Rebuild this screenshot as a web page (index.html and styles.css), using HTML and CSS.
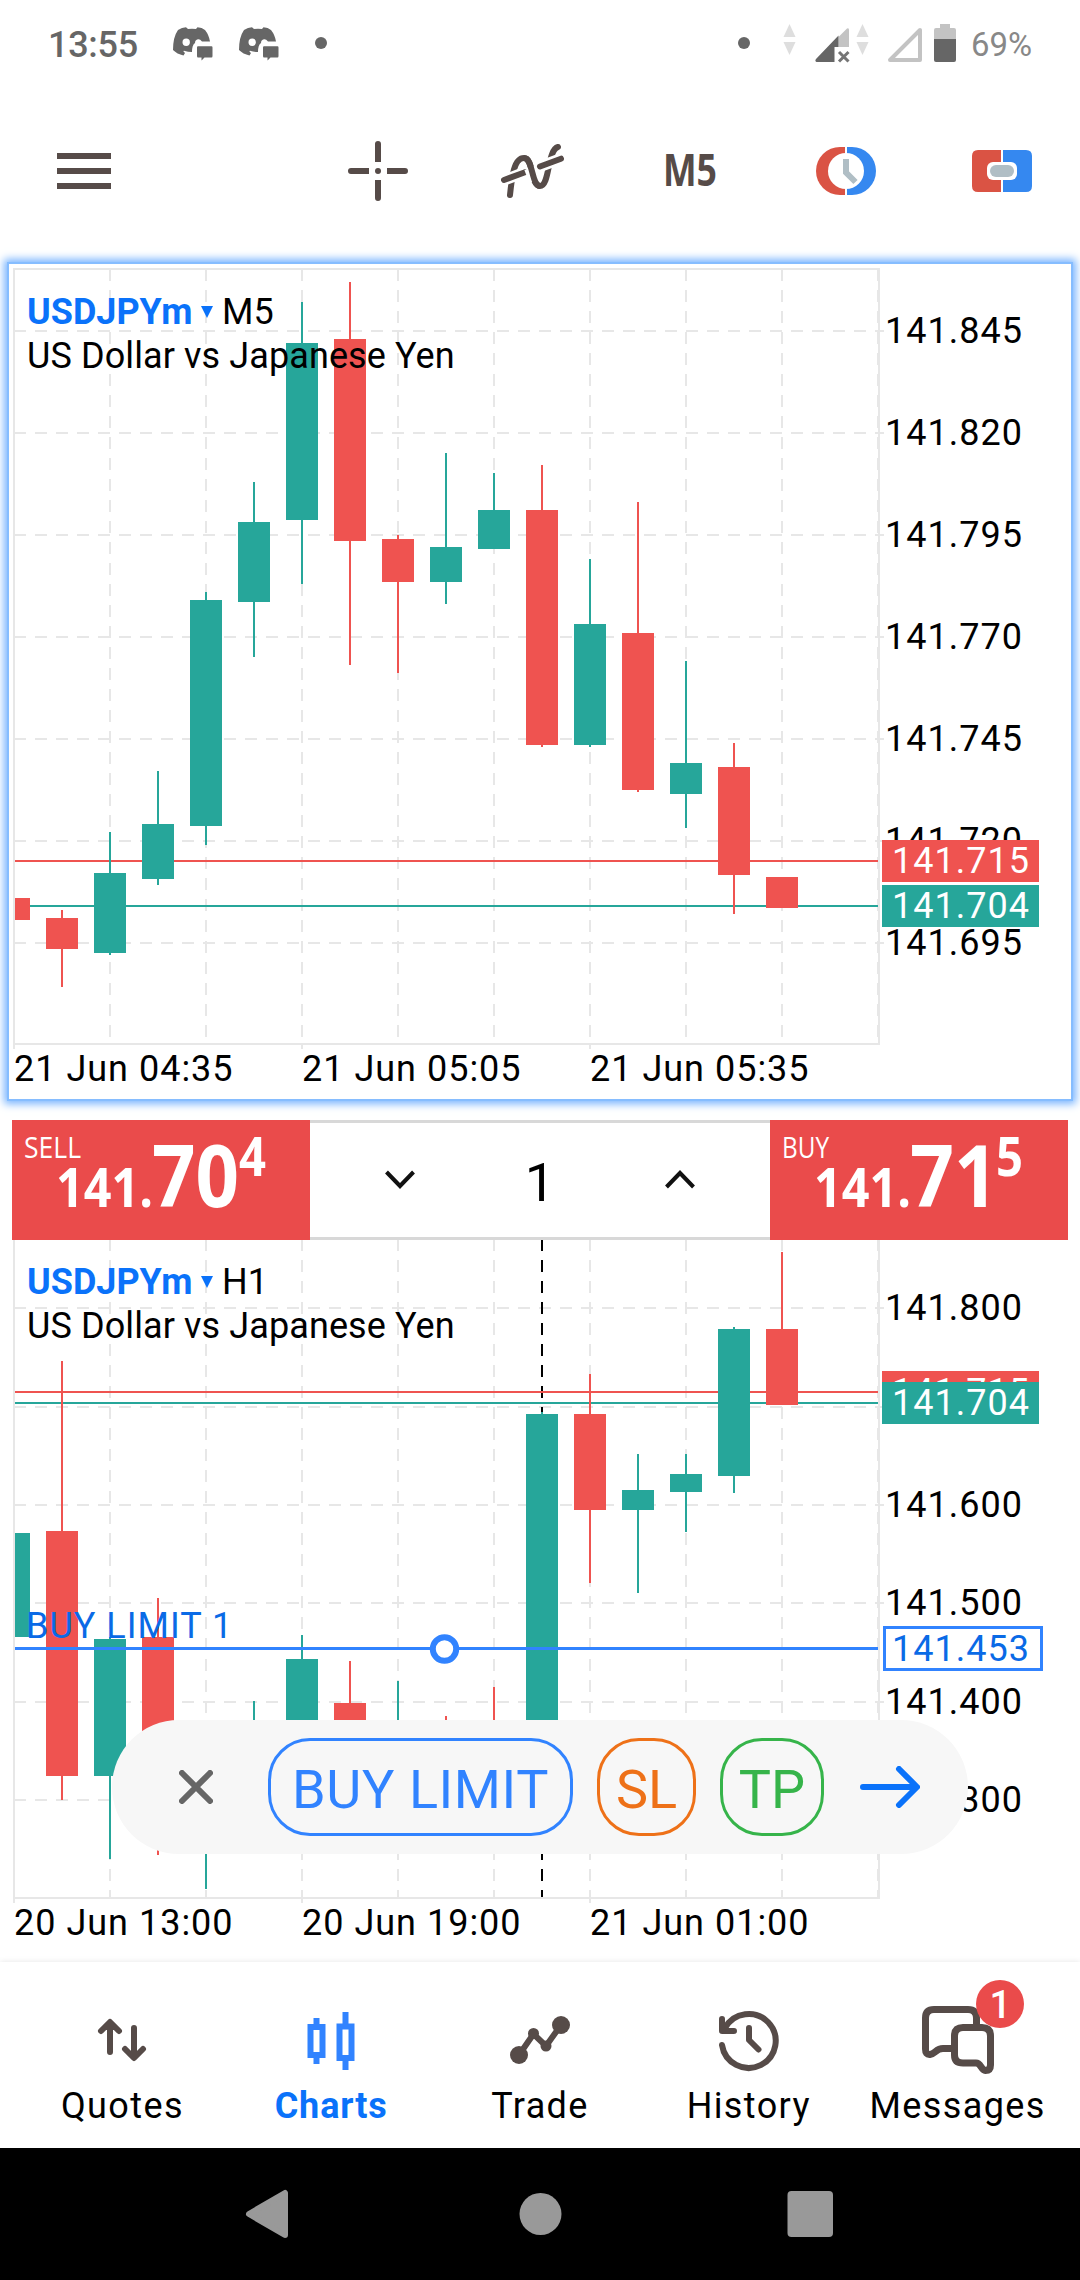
FILE: index.html
```html
<!DOCTYPE html>
<html lang="en">

<head>
    <meta charset="UTF-8">
    <meta name="viewport" content="width=device-width, initial-scale=1.0">
    <title>Charts</title>
    <link rel="stylesheet" href="styles.css">
</head>

<body>
    <header class="status-bar">
        <span class="clock">13:55</span>
        <svg class="chat-icon" width="41" height="36" viewBox="0 0 41 36">
            <path fill-rule="evenodd" d="M5 3Q9 .5 13 .3L15 2Q19 1.4 23 2L24.500 .3Q29 .5 32 3Q36 8 37 14.500H29Q27 12 25 12.300Q22 13 22 16Q19 18 19 25Q15 25 11 23.800Q9.500 24 12 26L10.500 28.500Q4 27 0 23Q0 10 5 3zM9.500 15.300a3.700 3.700 0 1 0 7.400 0a3.700 3.700 0 1 0 -7.400 0z" />
            <path d="M25 19.300H38.500Q39.500 19.300 39.500 20.500V29Q39.500 30.500 38.500 30.500H31.500L28.500 33.500V30.500H25Q24 30.500 24 29V20.500Q24 19.300 25 19.300z" />
        </svg>
        <svg class="chat-icon" width="41" height="36" viewBox="0 0 41 36">
            <path fill-rule="evenodd" d="M5 3Q9 .5 13 .3L15 2Q19 1.4 23 2L24.500 .3Q29 .5 32 3Q36 8 37 14.500H29Q27 12 25 12.300Q22 13 22 16Q19 18 19 25Q15 25 11 23.800Q9.500 24 12 26L10.500 28.500Q4 27 0 23Q0 10 5 3zM9.500 15.300a3.700 3.700 0 1 0 7.400 0a3.700 3.700 0 1 0 -7.400 0z" />
            <path d="M25 19.300H38.500Q39.500 19.300 39.500 20.500V29Q39.500 30.500 38.500 30.500H31.500L28.500 33.500V30.500H25Q24 30.500 24 29V20.500Q24 19.300 25 19.300z" />
        </svg>
        <span class="dot"></span>
        <svg class="status-icons" width="300" height="90" viewBox="735 0 300 90">
            <circle cx="744" cy="43" r="6" fill="#666" />
            <path fill="#dedede" d="M789.500 24l6 13h-12zM789.500 55l6-13h-12zM862.500 24l6 13h-12zM862.500 55l6-13h-12z" />
            <path fill="#c3c3c3" d="M838.500 37L847 28.500Q849 27.500 849 30V47H838.500z" />
            <path fill="#666" d="M838.500 35.500V47H834.500V62H816.500Q814.500 61 816 59z" />
            <path stroke="#757575" stroke-width="3" d="M839 52l9.500 9.500M848.500 52l-9.500 9.500" />
            <path fill="none" stroke="#c3c3c3" stroke-width="4" stroke-linejoin="round" d="M890 60L920 30V60z" />
            <path fill="#c3c3c3" d="M940 28v-4h10v4h4q2 0 2 2v9h-22v-9q0-2 2-2z" />
            <path fill="#666" d="M934 39h22v21q0 2-2 2h-18q-2 0-2-2z" />
            <text class="battery" x="971" y="55.500" textLength="61" lengthAdjust="spacingAndGlyphs">69%</text>
        </svg>
    </header>

    <nav class="toolbar">
        <svg width="54" height="60" viewBox="57 141 54 60">
            <path d="M57 156h54M57 171h54M57 186h54" />
        </svg>
        <svg class="crosshair" width="60" height="60" viewBox="348 141 60 60">
            <path stroke-linecap="round" d="M378 144v14M378 184v14M351 171h14M391 171h14" />
            <path d="M378 157v5M378 180v5M364 171h5M387 171h5" />
            <circle cx="378" cy="171" r="3" fill="#564b48" />
        </svg>
        <svg class="indicators" width="66" height="60" viewBox="500 141 66 60">
            <path stroke-linecap="round" d="M510 195C512 176 514 158 524 158C534 158 530 186 540 186C550 186 547 150 558 147" />
            <path class="cut" d="M501 181.200L528 171M536 168L564 157.500" />
            <path stroke-linecap="round" d="M504 180L525 172.200M540 166.500L561 158.700" />
            <path class="cut" d="M529.500 168L534.500 181" />
            <path d="M524 158C533 158 531.500 186 540 186" />
        </svg>
        <svg class="timeframe" width="54" height="60" viewBox="663 141 54 60">
            <text class="period" x="663" y="186" textLength="54" lengthAdjust="spacingAndGlyphs">M5</text>
        </svg>
        <svg width="60" height="60" viewBox="816 141 60 60">
            <path class="sell-fill" d="M845 147h-5a24 24 0 0 0 0 48h5z" />
            <path class="buy-fill" d="M847 147h5a24 24 0 0 1 0 48h-5z" />
            <circle cx="846" cy="171" r="18" fill="#fff" />
            <path class="gray-line" d="M846 159v13.500l9.500 9.500" />
        </svg>
        <svg width="60" height="60" viewBox="972 141 60 60">
            <path class="sell-fill" d="M1001 150h-23q-6 0-6 6v30q0 6 6 6h23z" />
            <path class="buy-fill" d="M1003 150h23q6 0 6 6v30q0 6-6 6h-23z" />
            <rect x="987" y="162" width="30" height="18" rx="6" fill="#fff" />
            <rect x="990" y="165" width="24" height="12" rx="6" fill="#b0bec5" />
        </svg>
    </nav>

    <main>
        <section class="chart-panel selected">
            <svg width="1062" height="835" viewBox="9 264 1062 835">
                <path class="grid" d="M110 269V1043M206 269V1043M302 269V1043M398 269V1043M494 269V1043M590 269V1043M686 269V1043M782 269V1043M878 269V1043" />
                <path class="grid" d="M14 331H878M14 433H878M14 535H878M14 637H878M14 739H878M14 841H878M14 943H878" />
                <path class="frame" d="M14 1049V269H879V1044H14M302 1044V1049M590 1044V1049M878 331h6M878 433h6M878 535h6M878 637h6M878 739h6M878 841h6M878 943h6" />
                <path class="ask" d="M15 861H878" />
                <path class="bid" d="M15 906H878" />

                <path class="wick up" d="M110 832V955M158 771V885M206 592V845M254 482V657M302 302V584M446 453V604M494 473V549M590 559V747M686 661V828" />
                <path class="body up" d="M110 873V953M158 824V879M206 600V826M254 522V602M302 343V520M446 547V582M494 510V549M590 624V745M686 763V794" />
                <path class="wick down" d="M62 910V987M350 282V665M398 535V673M542 465V747M638 502V792M734 743V914" />
                <path class="body down" d="M62 918V949M350 339V541M398 539V582M542 510V745M638 633V790M734 767V875M782 877V908" />
                <rect class="down-fill" x="15" y="898" width="15" height="22" />

                <text class="symbol" x="27" y="324">USDJPYm</text>
                <path fill="#0a72fa" d="M201 306h12l-6 12z" />
                <text x="222" y="324" class="title">M5</text>
                <text x="27" y="367.500" class="title">US Dollar vs Japanese Yen</text>

                <text x="885" y="343">141.845</text>
                <text x="885" y="445">141.820</text>
                <text x="885" y="547">141.795</text>
                <text x="885" y="649">141.770</text>
                <text x="885" y="751">141.745</text>
                <text x="885" y="853">141.720</text>
                <text x="885" y="955">141.695</text>
                <rect class="down-fill" x="882" y="840" width="157" height="42" />
                <text class="tag" x="892" y="873">141.715</text>
                <rect class="up-fill" x="882" y="885" width="157" height="42" />
                <text class="tag" x="892" y="918">141.704</text>

                <text x="14" y="1081">21 Jun 04:35</text>
                <text x="302" y="1081">21 Jun 05:05</text>
                <text x="590" y="1081">21 Jun 05:35</text>
            </svg>
        </section>

        <section class="trade-bar">
            <svg class="price-button" width="298" height="120" viewBox="12 1120 298 120">
                <text class="side" x="24" y="1158" textLength="57" lengthAdjust="spacingAndGlyphs">SELL</text>
                <text class="price" x="56" y="1207" textLength="97" lengthAdjust="spacingAndGlyphs">141.</text>
                <text class="price big" x="152" y="1207" textLength="87" lengthAdjust="spacingAndGlyphs">70</text>
                <text class="price" x="239" y="1176" textLength="27" lengthAdjust="spacingAndGlyphs">4</text>
            </svg>
            <div class="volume">
                <svg width="30" height="20" viewBox="0 0 30 20">
                    <path d="M1.500 2L15 16L28.500 2" />
                </svg>
                <span>1</span>
                <svg width="30" height="20" viewBox="0 0 30 20">
                    <path d="M1.500 17L15 3L28.500 17" />
                </svg>
            </div>
            <svg class="price-button" width="298" height="120" viewBox="770 1120 298 120">
                <text class="side" x="782" y="1158" textLength="47" lengthAdjust="spacingAndGlyphs">BUY</text>
                <text class="price" x="814" y="1207" textLength="97" lengthAdjust="spacingAndGlyphs">141.</text>
                <text class="price big" x="910" y="1207" textLength="88" lengthAdjust="spacingAndGlyphs">71</text>
                <text class="price" x="996" y="1176" textLength="27" lengthAdjust="spacingAndGlyphs">5</text>
            </svg>
        </section>

        <section class="chart-panel">
            <svg width="1080" height="722" viewBox="0 1240 1080 722">
                <path class="grid" d="M110 1239V1897M206 1239V1897M302 1239V1897M398 1239V1897M494 1239V1897M590 1239V1897M686 1239V1897M782 1239V1897M878 1239V1897" />
                <path class="grid" d="M14 1308H878M14 1407H878M14 1505H878M14 1603H878M14 1702H878M14 1800H878" />
                <path class="frame" d="M14 1903V1240M879 1240V1898H14M302 1898V1903M590 1898V1903M878 1308h6M878 1407h6M878 1505h6M878 1603h6M878 1702h6M878 1800h6" />
                <path class="grid day" d="M542 1239V1897" />
                <path class="ask" d="M15 1392H878" />
                <path class="bid" d="M15 1403H878" />

                <path class="wick up" d="M110 1637V1859M206 1780V1889M254 1701V1800M302 1635V1800M398 1681V1800M542 1412V1800M638 1454V1593M686 1454V1532M734 1327V1493" />
                <path class="body up" d="M110 1639V1776M302 1659V1780M542 1414V1790M638 1490V1510M686 1474V1492M734 1329V1476" />
                <path class="wick down" d="M62 1361V1800M158 1598V1855M350 1661V1800M446 1716V1800M494 1687V1800M590 1374V1583M782 1252V1405" />
                <path class="body down" d="M62 1531V1776M158 1637V1790M350 1703V1780M590 1414V1510M782 1329V1405" />
                <rect class="up-fill" x="15" y="1533" width="15" height="104" />

                <text class="symbol" x="27" y="1294">USDJPYm</text>
                <path fill="#0a72fa" d="M201 1276h12l-6 12z" />
                <text x="222" y="1294" class="title">H1</text>
                <text x="27" y="1337.500" class="title">US Dollar vs Japanese Yen</text>

                <path class="order-line" d="M15 1648.500H878" />
                <circle class="handle" cx="444.500" cy="1649" r="11.700" />
                <text class="order" x="26" y="1637.500">BUY LIMIT 1</text>

                <text x="885" y="1320">141.800</text>
                <text x="885" y="1517">141.600</text>
                <text x="885" y="1615">141.500</text>
                <text x="885" y="1714">141.400</text>
                <text x="885" y="1812">141.300</text>
                <rect class="down-fill" x="882" y="1371" width="157" height="42" />
                <text class="tag" x="892" y="1404">141.715</text>
                <rect class="up-fill" x="882" y="1382" width="157" height="42" />
                <text class="tag" x="892" y="1415">141.704</text>
                <rect class="order-tag" x="884.500" y="1627.500" width="157" height="42" />
                <text class="order" x="892" y="1661">141.453</text>

                <text x="14" y="1935">20 Jun 13:00</text>
                <text x="302" y="1935">20 Jun 19:00</text>
                <text x="590" y="1935">21 Jun 01:00</text>
            </svg>

            <div class="order-popup">
                <svg class="close" width="34" height="34" viewBox="0 0 34 34">
                    <path d="M3 3L31 31M31 3L3 31" />
                </svg>
                <button class="btn btn-limit">BUY LIMIT</button>
                <button class="btn btn-sl">SL</button>
                <button class="btn btn-tp">TP</button>
                <svg class="next" width="60" height="42" viewBox="0 0 60 42">
                    <path d="M3 21H56M39 3L57 21L39 39" />
                </svg>
            </div>
        </section>
    </main>

    <nav class="tab-bar">
        <a class="tab">
            <svg width="90" height="76" viewBox="77 2000 90 76">
                <path d="M110 2052V2023M101 2031L110 2022L119 2031M134 2028V2057M125 2049L134 2058L143 2049" />
            </svg>
            <span>Quotes</span>
        </a>
        <a class="tab active">
            <svg width="90" height="76" viewBox="286 2000 90 76">
                <path d="M310.500 2027h12v28h-12zM316.500 2018v8M316.500 2056v8M339.500 2026.500h12v31.500h-12zM345.500 2012v14M345.500 2058v12" />
            </svg>
            <span>Charts</span>
        </a>
        <a class="tab">
            <svg width="90" height="76" viewBox="495 2000 90 76">
                <path d="M519 2055L533.500 2034L546 2046L561 2025" />
                <g fill="#564b48" stroke="none">
                    <circle cx="519" cy="2055" r="9" />
                    <circle cx="533.500" cy="2033.500" r="5.500" />
                    <circle cx="546" cy="2046" r="5.500" />
                    <circle cx="561" cy="2025" r="9" />
                </g>
            </svg>
            <span>Trade</span>
        </a>
        <a class="tab">
            <svg width="90" height="76" viewBox="704 2000 90 76">
                <path d="M722 2045A27 27 0 1 0 725 2028M722 2019V2031H734M749 2028V2040L758.500 2049.500" />
            </svg>
            <span>History</span>
        </a>
        <a class="tab">
            <svg width="90" height="76" viewBox="913 2000 90 76">
                <path class="bubble" d="M976.500 2024V2018Q976.500 2009.500 968 2009.500H934Q925.500 2009.500 925.500 2018V2049Q925.500 2055 930 2054.500C935 2054 936 2048.500 943 2048.500H952" />
                <path class="bubble" d="M963 2027.500H982Q990.500 2027.500 990.500 2036V2065Q990.500 2070.500 985.500 2070.500C981 2070 981 2063 976 2063H963Q954.500 2063 954.500 2055V2036Q954.500 2027.500 963 2027.500z" />
            </svg>
            <span>Messages</span>
            <b class="badge">1</b>
        </a>
    </nav>

    <footer class="system-nav">
        <svg width="54" height="54" viewBox="240 2187 54 54">
            <path stroke="#999" stroke-width="6" stroke-linejoin="round" d="M249 2214L285 2193V2235z" />
        </svg>
        <svg width="54" height="54" viewBox="511.500 2187 54 54">
            <circle cx="540" cy="2214" r="21" />
        </svg>
        <svg width="54" height="54" viewBox="783 2187 54 54">
            <rect x="787.500" y="2191" width="45.500" height="46" rx="4" />
        </svg>
    </footer>
</body>

</html>
```
FILE: styles.css
```css
* {
    box-sizing: border-box;
}

body {
    margin: 0;
    width: 1080px;
    height: 2280px;
    display: flex;
    flex-direction: column;
    overflow: hidden;
    background-color: #fff;
    font-family: Roboto, sans-serif;
    font-size: 36px;
    color: #000;
}

svg {
    display: block;
    flex-shrink: 0;
}

/* status bar */
.status-bar {
    display: flex;
    align-items: center;
    height: 90px;
    padding: 0 45px 0 48px;
    color: #666;
}

.clock {
    width: 125px;
    font-weight: 500;
    line-height: 42px;
    letter-spacing: -0.3px;
}

.chat-icon {
    margin-right: 25px;
    fill: #666;
}

.dot {
    width: 12px;
    height: 12px;
    margin: 0 0 4px 10px;
    border-radius: 50%;
    background-color: #666;
}

.status-icons {
    margin-left: auto;
}

.battery {
    font-size: 33px;
    fill: #888;
}

/* toolbar */
.toolbar {
    display: flex;
    align-items: center;
    gap: 96px;
    height: 162px;
    padding-left: 57px;
}

.toolbar svg {
    overflow: visible;
}

.toolbar path {
    fill: none;
    stroke: #564b48;
    stroke-width: 6;
}

.toolbar .crosshair {
    margin-left: 141px;
}

.toolbar .indicators {
    margin: 0 1px 0 -4px;
}

.toolbar .timeframe {
    margin-right: 3px;
}

.toolbar .cut {
    stroke: #fff;
    stroke-width: 11;
}

.toolbar .sell-fill {
    fill: #da5344;
    stroke: none;
}

.toolbar .buy-fill {
    fill: #3588f0;
    stroke: none;
}

.toolbar .gray-line {
    stroke: #b0bec5;
}

.period {
    font: 700 44px "Open Sans", sans-serif;
    fill: #564b48;
}

/* charts */
.chart-panel {
    position: relative;
}

.chart-panel.selected {
    margin: 12px 9px 21px;
    box-shadow: 0 0 0 2px #86bdff, 0 0 8px 5px #7ab5ff;
}

.chart-panel.selected svg {
    background-color: #fff;
}

.chart-panel text {
    letter-spacing: 1px;
}

.chart-panel .title {
    letter-spacing: 0.1px;
}

.chart-panel .symbol {
    font-weight: 700;
    letter-spacing: 0;
    fill: #0a72fa;
}

.chart-panel .tag {
    fill: #fff;
}

.grid,
.frame {
    fill: none;
    stroke: #e7e7e7;
    stroke-width: 2;
}

.grid {
    stroke-dasharray: 12 9;
}

.grid.day {
    stroke: #000;
}

.wick,
.ask,
.bid {
    stroke-width: 2;
}

.body {
    stroke-width: 32;
}

.up,
.bid {
    stroke: #26a69a;
}

.down,
.ask {
    stroke: #ef5350;
}

.up-fill {
    fill: #26a69a;
}

.down-fill {
    fill: #ef5350;
}

.order-line,
.order-tag {
    stroke: #3183ff;
    stroke-width: 3;
    fill: #fff;
}

.handle {
    stroke: #3183ff;
    stroke-width: 6;
    fill: #fff;
}

.chart-panel .order {
    fill: #0a6ae6;
}

/* one click trading */
.trade-bar {
    display: flex;
    height: 120px;
    margin: 0 12px;
}

.price-button {
    background-color: #ea4b4b;
    font-family: "Open Sans", sans-serif;
    fill: #fff;
}

.side {
    font-size: 30px;
}

.price {
    font-size: 54px;
    font-weight: 700;
}

.price.big {
    font-size: 86px;
}

.volume {
    flex: 1;
    display: flex;
    align-items: center;
    justify-content: space-between;
    padding: 0 75px;
    border-top: 3px solid #d8d8d8;
    border-bottom: 3px solid #d8d8d8;
    font-size: 54px;
}

.volume span {
    padding-top: 5px;
}

.volume path {
    fill: none;
    stroke: #111;
    stroke-width: 4;
}

/* pending order popup */
.order-popup {
    position: absolute;
    top: 480px;
    left: 112px;
    display: flex;
    align-items: center;
    width: 856px;
    height: 134px;
    padding-left: 67px;
    border-radius: 67px;
    background-color: #f7f7f7;
}

.order-popup path {
    fill: none;
    stroke: #666;
    stroke-width: 6;
    stroke-linecap: round;
    stroke-linejoin: round;
}

.order-popup .next path {
    stroke: #0a72fa;
}

.btn {
    height: 98px;
    padding: 4px 0 0;
    margin-right: 24px;
    border: 3px solid;
    border-radius: 42px;
    background: none;
    font-family: inherit;
    font-size: 54px;
}

.btn-limit {
    width: 305px;
    margin-left: 55px;
    letter-spacing: 0.6px;
    color: #3183ff;
}

.btn-sl {
    width: 99px;
    color: #ee7118;
}

.btn-tp {
    width: 104px;
    margin-right: 36px;
    color: #36b44a;
}

/* bottom tabs */
.tab-bar {
    position: relative;
    display: flex;
    height: 186px;
    padding: 38px 18px 0;
    background-color: #fff;
    box-shadow: 0 0 6px rgba(0, 0, 0, 0.1);
}

.tab {
    position: relative;
    flex: 1 1 0;
    display: flex;
    flex-direction: column;
    align-items: center;
    gap: 9px;
    line-height: 42px;
    letter-spacing: 1.4px;
}

.tab path {
    fill: none;
    stroke: #564b48;
    stroke-width: 6;
    stroke-linecap: round;
    stroke-linejoin: round;
}

.tab .bubble {
    stroke-width: 7;
}

.tab.active {
    color: #0a72fa;
    font-weight: 700;
    letter-spacing: 0.9px;
}

.tab.active path {
    stroke: #3183ff;
    stroke-linecap: butt;
    stroke-linejoin: miter;
}

.badge {
    position: absolute;
    top: -20px;
    left: 123px;
    width: 48px;
    height: 48px;
    border-radius: 50%;
    background-color: #ea4b4b;
    color: #fff;
    font-size: 38px;
    font-weight: 500;
    line-height: 50px;
    letter-spacing: 0;
    text-align: center;
}

/* system buttons */
.system-nav {
    flex: 1;
    display: flex;
    align-items: center;
    justify-content: space-between;
    padding: 0 243px 0 240px;
    background-color: #000;
}

.system-nav svg {
    fill: #999;
}
```
